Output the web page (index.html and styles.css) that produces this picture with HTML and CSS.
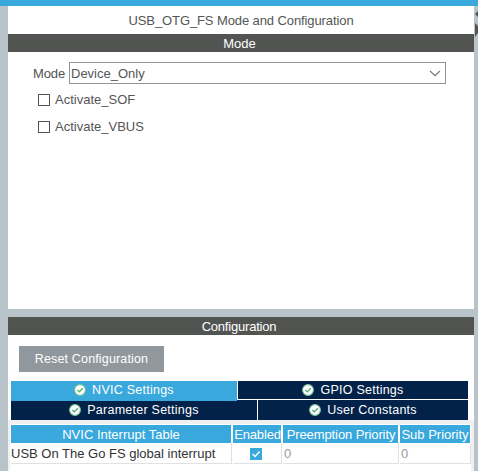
FILE: index.html
```html
<!DOCTYPE html>
<html lang="en">
<head>
<meta charset="utf-8">
<title>USB_OTG_FS Mode and Configuration</title>
<link rel="stylesheet" href="styles.css">
</head>
<body>
<svg class="defs" width="0" height="0" aria-hidden="true">
  <symbol id="ok" viewBox="0 0 12 12">
    <circle cx="6" cy="6" r="5.4" fill="#fff" stroke="#79c596" stroke-width="1.1"/>
    <path d="M3.3 5.9 5.3 7.9 8.8 4.3" fill="none" stroke="#43ad6b" stroke-width="1.3"/>
  </symbol>
</svg>
<div class="topbar"></div>
<main class="window">
  <section class="panel mode">
    <h1 class="title"><span class="t-title">USB_OTG_FS Mode and Configuration</span></h1>
    <h2 class="bar"><span class="t-mode">Mode</span></h2>
    <div class="field">
      <span class="label">Mode</span>
      <div class="select"><span class="t-device">Device_Only</span>
        <svg class="chevron" width="12" height="7" viewBox="0 0 12 7"><path d="M1 1 6 5.7 11 1" fill="none" stroke="#777" stroke-width="1.1"/></svg>
      </div>
    </div>
    <div class="check"><i class="box"></i><span class="t-sof">Activate_SOF</span></div>
    <div class="check"><i class="box"></i><span class="t-vbus">Activate_VBUS</span></div>
  </section>
  <section class="panel config">
    <h2 class="bar"><span class="t-config">Configuration</span></h2>
    <div class="reset"><span class="t-reset">Reset Configuration</span></div>
    <div class="tabs">
      <div class="tab active"><svg class="ok"><use href="#ok"/></svg><span>NVIC Settings</span></div>
      <div class="tab gpio"><svg class="ok"><use href="#ok"/></svg><span>GPIO Settings</span></div>
    </div>
    <div class="tabs second">
      <div class="tab param"><svg class="ok"><use href="#ok"/></svg><span>Parameter Settings</span></div>
      <div class="tab user"><svg class="ok"><use href="#ok"/></svg><span>User Constants</span></div>
    </div>
    <div class="tablewrap">
      <div class="grid">
        <div class="th">NVIC Interrupt Table</div>
        <div class="th enabled">Enabled</div>
        <div class="th priority">Preemption Priority</div>
        <div class="th">Sub Priority</div>
        <div class="td">USB On The Go FS global interrupt</div>
        <div class="td center"><svg width="12" height="12" viewBox="0 0 12 12"><path fill="#39a8dc" d="M0 0h12v12H0z"/><path d="M2.5 6 5 8.5 9.7 3.6" fill="none" stroke="#fff" stroke-width="1.4"/></svg></div>
        <div class="td zero">0</div>
        <div class="td zero">0</div>
      </div>
    </div>
  </section>
  <svg class="edge" width="4" height="34" viewBox="0 0 4 34"><path d="M4 5 1 8 4 11zM1 17 4 20V27L1 31z" fill="#525452"/></svg>
</main>
</body>
</html>
```
FILE: styles.css
```css
* { box-sizing: border-box; }
body {
  margin: 0;
  width: 478px;
  height: 471px;
  overflow: hidden;
  background: #b9c4ca;
  color: #555;
  font: 13px/18px "Liberation Sans", Arial, sans-serif;
}
h1, h2 { margin: 0; font: inherit; }
span, .th, .td { white-space: nowrap; }
.defs { position: absolute; }
.topbar { height: 6px; background: #39a8dc; }
.window { position: relative; padding: 0 4px 0 8px; }
.edge { position: absolute; top: 0; right: 0; }
.panel { background: #fff; }
.mode { height: 303px; }
.title { height: 28px; padding-top: 6px; text-align: center; }
.bar { height: 18px; background: #525452; color: #fff; text-align: center; line-height: 19px; }
.bar span { margin-right: 3px; }
.config .bar span { margin-right: 4px; }
.field { display: flex; align-items: center; margin-top: 10px; padding-left: 25px; height: 22px; }
.label { width: 36px; padding-top: 2px; letter-spacing: -0.1px; }
.t-device { padding-top: 2px; }
.select {
  display: flex;
  align-items: center;
  justify-content: space-between;
  width: 377px;
  height: 22px;
  padding: 0 4px 0 1px;
  border: 1px solid #8f969a;
}
.check { display: flex; align-items: center; gap: 5px; height: 27px; padding-left: 30px; }
.check span { padding-top: 1px; }
.field + .check { margin-top: 2px; }
.box { width: 12px; height: 12px; border: 1px solid #505050; }
.config { height: 154px; margin-top: 8px; }
.reset {
  width: 145px;
  height: 26px;
  margin: 11px 0 9px 11px;
  background: #90989e;
  color: #fff;
  font-size: 12.5px;
  letter-spacing: 0.15px;
  line-height: 27px;
  text-align: center;
}
.tabs {
  display: flex;
  align-items: flex-start;
  gap: 1px;
  height: 19px;
  margin-left: 3px;
  width: 457px;
  color: #fff;
  font-size: 12.5px;
  letter-spacing: 0.25px;
}
.tab { display: flex; align-items: center; justify-content: center; gap: 6px; height: 18px; background: #03224a; }
.ok { width: 12px; height: 12px; }
.active { position: relative; width: 226px; height: 20px; padding-bottom: 2px; background: #39a8dc; }
.gpio { width: 230px; }
.second { height: 20px; }
.second .tab { height: 20px; padding-bottom: 1px; }
.param { width: 246px; }
.user { width: 210px; }
.tablewrap { height: 51px; padding: 4px 3px 0 2px; background: #f0f0f0; }
.grid {
  display: grid;
  grid-template-columns: 222px 50px 117px 71px;
  grid-template-rows: 18px 21px;
  height: 47px;
  padding: 1px 0 0 1px;
  background: #fff;
}
.th { margin-right: 2px; background: #39a8dc; color: #fff; text-align: center; line-height: 19px; overflow: hidden; }
.th:nth-child(4) { margin-right: 1px; }
.enabled { padding-left: 1px; letter-spacing: -0.15px; }
.priority { padding-left: 1px; letter-spacing: -0.1px; }
.td { margin-right: 1px; border-right: 1px solid #dfe1e2; border-bottom: 1px solid #dfe1e2; color: #333; line-height: 21px; }
.td:last-child { margin-right: 0; }
.center { display: flex; align-items: center; justify-content: center; padding: 1px 2px 0 0; }
.zero { padding-left: 1px; color: #999; }
.t-title { letter-spacing: -0.1px; }
.t-config { letter-spacing: -0.2px; }
```
